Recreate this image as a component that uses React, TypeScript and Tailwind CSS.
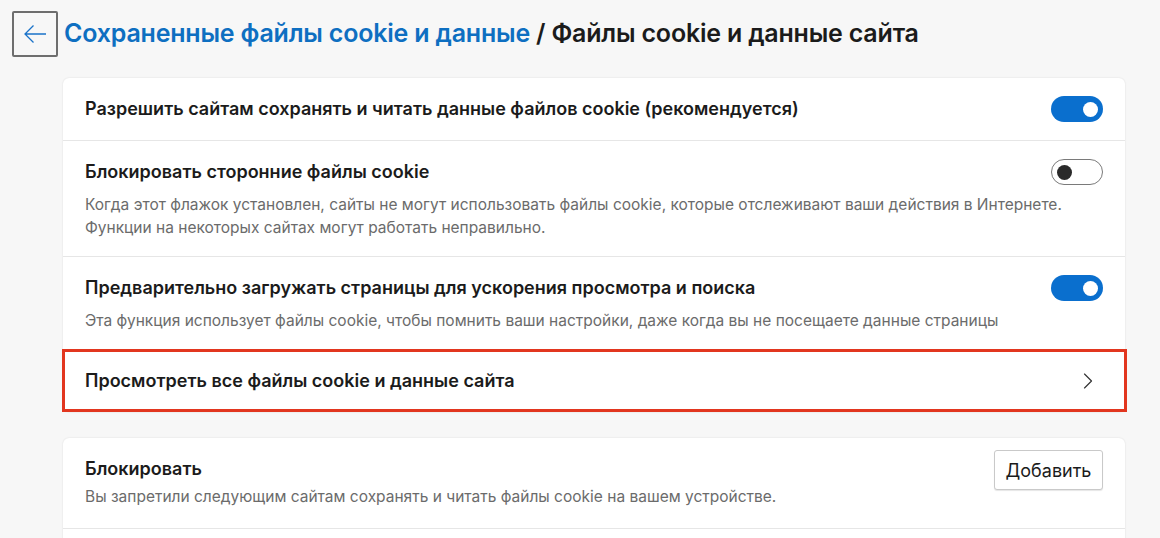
import { ChevronRight } from "lucide-react"

type ToggleProps = { on: boolean }

function Toggle({ on }: ToggleProps) {
  return on ? (
    <div className="flex h-[26px] w-[52px] shrink-0 items-center justify-end rounded-full bg-[#0a6fce] pr-[5px]">
      <div className="h-[15px] w-[15px] rounded-full bg-white" />
    </div>
  ) : (
    <div className="flex h-[26px] w-[52px] shrink-0 items-center rounded-full border border-[#7a7a7a] bg-white pl-[5px]">
      <div className="h-[15px] w-[15px] rounded-full bg-[#2a2a2a]" />
    </div>
  )
}

const rows = [
  {
    title: "Разрешить сайтам сохранять и читать данные файлов cookie (рекомендуется)",
    desc: [] as string[],
    on: true,
  },
  {
    title: "Блокировать сторонние файлы cookie",
    desc: [
      "Когда этот флажок установлен, сайты не могут использовать файлы cookie, которые отслеживают ваши действия в Интернете.",
      "Функции на некоторых сайтах могут работать неправильно.",
    ],
    on: false,
  },
  {
    title: "Предварительно загружать страницы для ускорения просмотра и поиска",
    desc: [
      "Эта функция использует файлы cookie, чтобы помнить ваши настройки, даже когда вы не посещаете данные страницы",
    ],
    on: true,
  },
]

export default function App() {
  return (
    <div
      className="h-[538px] w-[1160px] overflow-hidden bg-[#f7f7f7] text-[#1b1b1b]"
      style={{ fontFamily: "Inter, 'Noto Sans', sans-serif" }}
    >
      <div className="flex items-center gap-[6px] pl-[12px] pt-[11px]">
        <button className="flex h-[46px] w-[46px] items-center justify-center rounded-[2px] border-2 border-[#6e6e6e]">
          <svg width="24" height="20" viewBox="0 0 24 20" fill="none" stroke="#1a73c9" strokeWidth="1.3">
            <path d="M23 10H2M10.5 1.5L2 10l8.5 8.5" />
          </svg>
        </button>
        <h1 className="text-[25px] font-semibold tracking-[-0.2px]">
          <span className="text-[#0e6fc1]">Сохраненные файлы cookie и данные</span>
          <span> / Файлы cookie и данные сайта</span>
        </h1>
      </div>

      <div className="ml-[63px] mt-[21px] w-[1062px] rounded-[6px] bg-white shadow-[0_0_2px_rgba(0,0,0,0.12)]">
        {rows.map((r, i) => (
          <div
            key={i}
            className={`px-[22px] ${i > 0 ? "border-t border-[#e6e6e6]" : ""} py-[17px]`}
          >
            <div className="flex items-center justify-between">
              <div className="text-[18px] font-semibold leading-[28px]">{r.title}</div>
              <Toggle on={r.on} />
            </div>
            {r.desc.length > 0 && (
              <div className="mt-[7px] text-[15.5px] leading-[23px] text-[#6b6b6b]">
                {r.desc.map((d) => (
                  <div key={d}>{d}</div>
                ))}
              </div>
            )}
          </div>
        ))}
        <div className="-mr-[2px] -ml-[1px] flex h-[63px] items-center justify-between border-[3px] border-[#e2361f] pl-[20px] pr-[22px]">
          <div className="text-[18px] font-semibold">Просмотреть все файлы cookie и данные сайта</div>
          <ChevronRight className="h-[28px] w-[28px] text-[#333]" strokeWidth={1} />
        </div>
      </div>

      <div className="ml-[63px] mt-[26px] w-[1062px] rounded-[6px] bg-white shadow-[0_0_2px_rgba(0,0,0,0.12)]">
        <div className="flex items-start justify-between px-[22px] pb-[17px] pt-[12px]">
          <div className="pt-[5px]">
            <div className="text-[18px] font-semibold leading-[28px]">Блокировать</div>
            <div className="text-[15.5px] leading-[28px] text-[#6b6b6b]">
              Вы запретили следующим сайтам сохранять и читать файлы cookie на вашем устройстве.
            </div>
          </div>
          <button className="h-[40px] w-[109px] rounded-[3px] border border-[#c9c9c9] bg-white text-[18px] text-[#1b1b1b] shadow-[0_1px_1px_rgba(0,0,0,0.1)]">
            Добавить
          </button>
        </div>
        <div className="h-[20px] border-t border-[#e6e6e6]" />
      </div>
    </div>
  )
}
